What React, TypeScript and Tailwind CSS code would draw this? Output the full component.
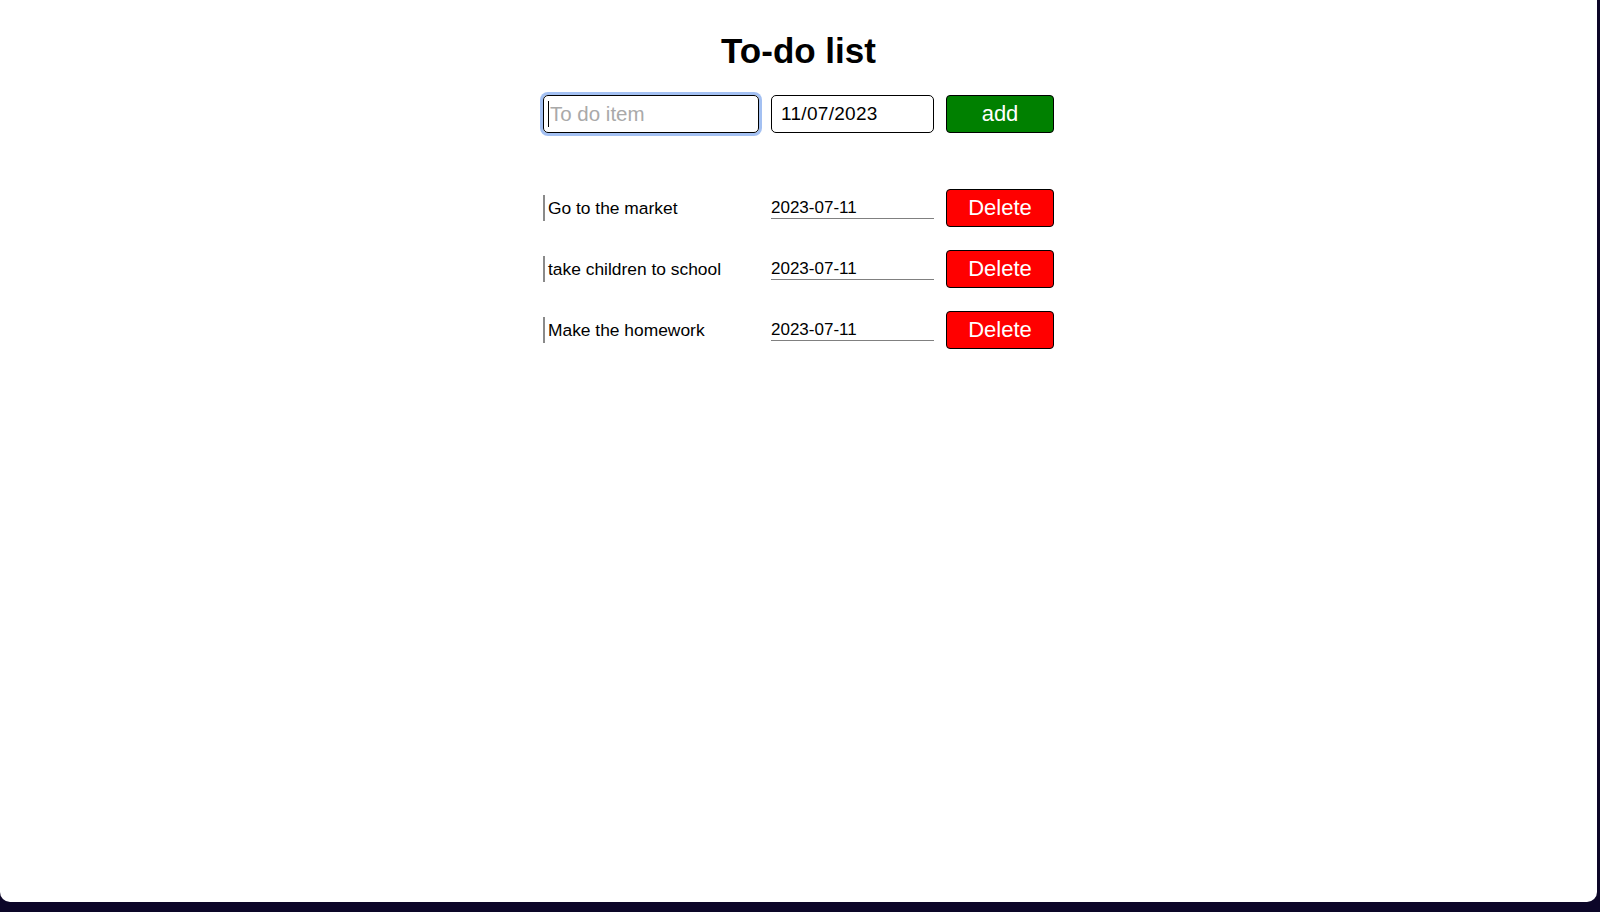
import { useState } from "react";

type Todo = { id: number; text: string; date: string };

const initialTodos: Todo[] = [
  { id: 1, text: "Go to the market", date: "2023-07-11" },
  { id: 2, text: "take children to school", date: "2023-07-11" },
  { id: 3, text: "Make the homework", date: "2023-07-11" },
];

export default function App() {
  const [todos, setTodos] = useState<Todo[]>(initialTodos);
  const [item, setItem] = useState("");

  const addTodo = () => {
    if (!item.trim()) return;
    setTodos([...todos, { id: Date.now(), text: item, date: "2023-07-11" }]);
    setItem("");
  };

  return (
    <div className="w-[1600px] h-[912px] bg-[#0c0628] overflow-hidden font-['Liberation_Sans',Arial,sans-serif]">
      <div className="w-[1597px] h-[902px] bg-white rounded-b-[10px] flex flex-col items-center">
        <h1 className="mt-[31px] text-[35px] leading-[40px] font-bold text-black">To-do list</h1>

        <div className="w-[511px] mt-[24px] flex flex-col">
          {/* input row */}
          <div className="flex items-center gap-[12px]">
            <div className="relative">
              <input
                value={item}
                onChange={(e) => setItem(e.target.value)}
                placeholder="To do item"
                className="w-[216px] h-[38px] border border-black rounded-[5px] pl-[6px] text-[20.5px] text-black placeholder:text-[#a9a9a9] outline-none shadow-[0_0_0_3px_#a3c0f2]"
              />
              {item === "" && (
                <span className="absolute left-[5px] top-[6px] w-px h-[26px] bg-black" />
              )}
            </div>
            <input
              type="text"
              defaultValue="11/07/2023"
              className="w-[163px] h-[38px] border border-black rounded-[5px] px-[9px] text-[19px] tracking-[0.3px] text-black outline-none"
            />
            <button
              onClick={addTodo}
              className="w-[108px] h-[38px] bg-[#008000] border border-black rounded-[4px] text-white text-[22px] leading-none"
            >
              add
            </button>
          </div>

          {/* list */}
          <div className="mt-[56px] flex flex-col gap-[23px]">
            {todos.map((t) => (
              <div key={t.id} className="flex items-center gap-[12px]">
                <div className="w-[216px] h-[26px] border-l-2 border-[#8a8a8a] pl-[3px] flex items-center text-[17.4px] text-black whitespace-nowrap">
                  {t.text}
                </div>
                <div className="w-[163px] border-b border-[#808080] text-[17px] leading-[20px] text-black">
                  {t.date}
                </div>
                <button
                  onClick={() => setTodos(todos.filter((x) => x.id !== t.id))}
                  className="w-[108px] h-[38px] bg-[#ff0000] border border-black rounded-[4px] text-white text-[22px] leading-none"
                >
                  Delete
                </button>
              </div>
            ))}
          </div>
        </div>
      </div>
    </div>
  );
}
